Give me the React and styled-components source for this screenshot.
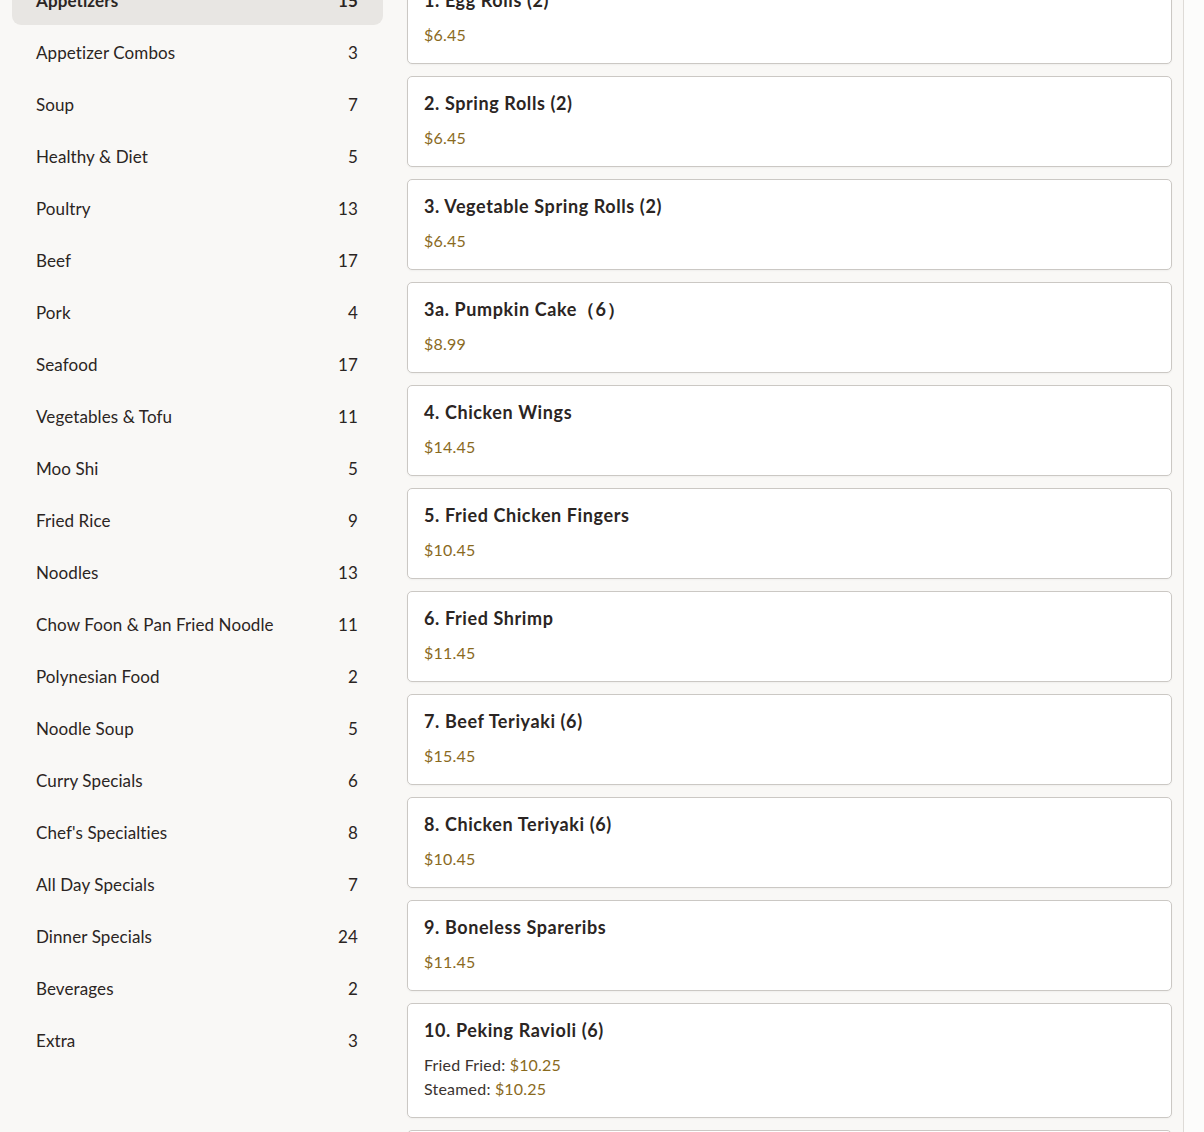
import React from 'react';
import styled, { createGlobalStyle, css } from 'styled-components';

const GlobalStyle = createGlobalStyle`
  html, body {
    margin: 0;
    padding: 0;
    background: #f9f8f6;
    overflow: hidden;
  }
  body {
    font-family: Lato, "Noto Sans", "Liberation Sans", sans-serif;
    color: #2b2523;
  }
`;

const Page = styled.div`
  display: flex;
  height: 1132px;
  overflow: hidden;
`;

const Layout = styled.div`
  flex: 1;
  display: grid;
  grid-template-columns: 395px 1fr;
  align-items: start;
  margin-top: -28px;
`;

const Gutter = styled.div`
  width: 20px;
  background: #fcfcfb;
  border-left: 1px solid #dedbd7;
`;

const Sidebar = styled.nav`
  padding: 1px 12px 0;
  display: flex;
  flex-direction: column;
`;

const CategoryRow = styled.div`
  display: flex;
  justify-content: space-between;
  align-items: center;
  height: 52px;
  padding: 2px 25px 0 24px;
  box-sizing: border-box;
  border-radius: 9px;
  font-size: 17px;
  letter-spacing: 0.1px;
  color: #2b2523;
  ${({ $active }) =>
    $active &&
    css`
      background: #e8e6e3;
      font-weight: 700;
    `}
`;

const Main = styled.main`
  padding: 1px 11px 0 12px;
  display: flex;
  flex-direction: column;
  gap: 12px;
`;

const Card = styled.div`
  background: #fff;
  border: 1px solid #cbc8c4;
  border-radius: 5px;
  padding: 15px 16px 16px;
  box-shadow: 0 1px 2px rgba(0, 0, 0, 0.04);
`;

const Title = styled.div`
  font-size: 18px;
  font-weight: 700;
  line-height: 22px;
  letter-spacing: 0.6px;
  color: #2b2523;
`;

const Prices = styled.div`
  margin-top: 12px;
`;

const PriceLine = styled.div`
  font-size: 16px;
  line-height: 24px;
  letter-spacing: 0.2px;
  color: #3a3330;
`;

const Price = styled.span`
  color: #8a6a1e;
`;

const categories = [
  ['Appetizers', 15, true],
  ['Appetizer Combos', 3],
  ['Soup', 7],
  ['Healthy & Diet', 5],
  ['Poultry', 13],
  ['Beef', 17],
  ['Pork', 4],
  ['Seafood', 17],
  ['Vegetables & Tofu', 11],
  ['Moo Shi', 5],
  ['Fried Rice', 9],
  ['Noodles', 13],
  ['Chow Foon & Pan Fried Noodle', 11],
  ['Polynesian Food', 2],
  ['Noodle Soup', 5],
  ['Curry Specials', 6],
  ["Chef's Specialties", 8],
  ['All Day Specials', 7],
  ['Dinner Specials', 24],
  ['Beverages', 2],
  ['Extra', 3],
];

const items = [
  { name: '1. Egg Rolls (2)', prices: [[null, '$6.45']] },
  { name: '2. Spring Rolls (2)', prices: [[null, '$6.45']] },
  { name: '3. Vegetable Spring Rolls (2)', prices: [[null, '$6.45']] },
  { name: '3a. Pumpkin Cake\uFF086\uFF09', prices: [[null, '$8.99']] },
  { name: '4. Chicken Wings', prices: [[null, '$14.45']] },
  { name: '5. Fried Chicken Fingers', prices: [[null, '$10.45']] },
  { name: '6. Fried Shrimp', prices: [[null, '$11.45']] },
  { name: '7. Beef Teriyaki (6)', prices: [[null, '$15.45']] },
  { name: '8. Chicken Teriyaki (6)', prices: [[null, '$10.45']] },
  { name: '9. Boneless Spareribs', prices: [[null, '$11.45']] },
  {
    name: '10. Peking Ravioli (6)',
    prices: [
      ['Fried Fried', '$10.25'],
      ['Steamed', '$10.25'],
    ],
  },
  { name: '11. Crab Rangoon (8)', prices: [[null, '$9.45']] },
];

const App = () => {
  return (
    <Page>
      <GlobalStyle />
      <Layout>
        <Sidebar>
          {categories.map(([name, count, active]) => (
            <CategoryRow key={name} $active={active}>
              <span>{name}</span>
              <span>{count}</span>
            </CategoryRow>
          ))}
        </Sidebar>
        <Main>
          {items.map((item) => (
            <Card key={item.name}>
              <Title>{item.name}</Title>
              <Prices>
                {item.prices.map(([label, price]) => (
                  <PriceLine key={label || price}>
                    {label && `${label}: `}
                    <Price>{price}</Price>
                  </PriceLine>
                ))}
              </Prices>
            </Card>
          ))}
        </Main>
      </Layout>
      <Gutter />
    </Page>
  );
};

export default App;
